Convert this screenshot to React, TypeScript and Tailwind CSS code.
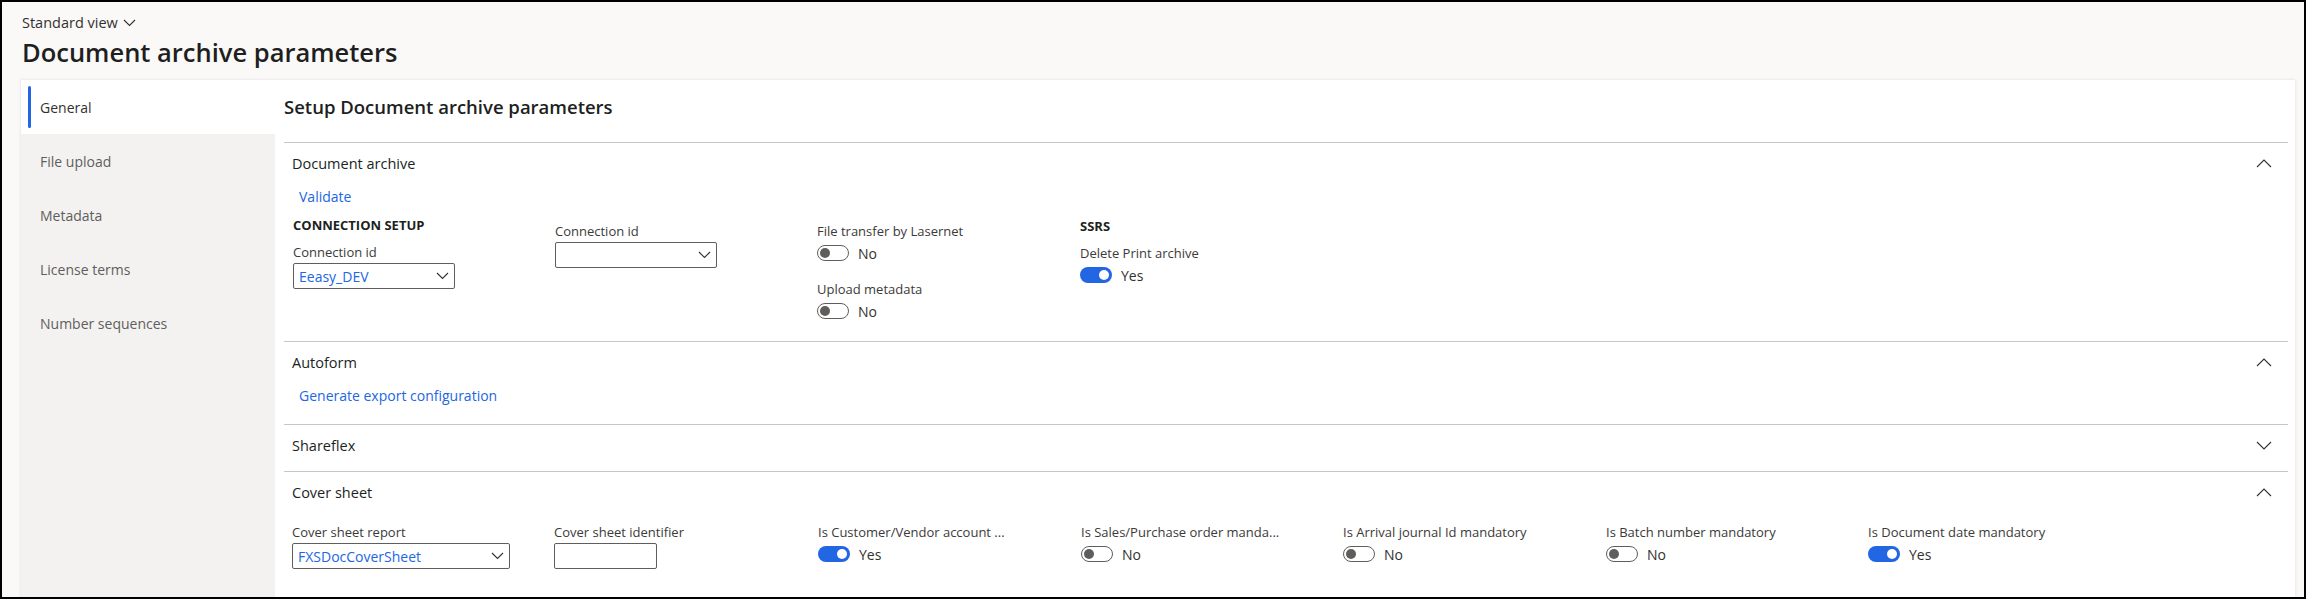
import React from "react"

const Chevron = ({ up }: { up?: boolean }) => (
  <svg width="16" height="9" viewBox="0 0 16 9" fill="none" stroke="#323130" strokeWidth="1.1">
    {up ? <polyline points="1,8 8,1 15,8" /> : <polyline points="1,1 8,8 15,1" />}
  </svg>
)

const SmallChevron = () => (
  <svg width="13" height="8" viewBox="0 0 13 8" fill="none" stroke="#323130" strokeWidth="1.1">
    <polyline points="1,1 6.5,6.5 12,1" />
  </svg>
)

const Toggle = ({ on }: { on?: boolean }) => (
  <div className="flex items-center h-[24px] gap-[9px]">
    {on ? (
      <div className="w-[32px] h-[16px] rounded-full bg-[#2266e3] flex items-center justify-end pr-[3px]">
        <div className="w-[10px] h-[10px] rounded-full bg-white" />
      </div>
    ) : (
      <div className="w-[32px] h-[16px] rounded-full border border-[#605e5c] flex items-center pl-[2px]">
        <div className="w-[10px] h-[10px] rounded-full bg-[#605e5c]" />
      </div>
    )}
    <span className="text-[14px] text-[#323130]">{on ? "Yes" : "No"}</span>
  </div>
)

const Dropdown = ({ value, w }: { value?: string; w: string }) => (
  <div className={`flex items-center justify-between border border-[#605e5c] rounded-[2px] h-[26px] pl-[5px] pr-[5px] ${w}`}>
    <span className="text-[14px] text-[#2266e3]">{value}</span>
    <SmallChevron />
  </div>
)

const Label = ({ children }: { children: React.ReactNode }) => (
  <div className="h-[20px] leading-[20px] text-[13px] text-[#3b3a39] whitespace-nowrap">{children}</div>
)

const Section = ({ title, up, children, pb }: { title: string; up?: boolean; children?: React.ReactNode; pb: string }) => (
  <div className={`border-t border-[#c8c6c4] ${pb}`}>
    <div className="h-[41px] flex items-center justify-between pl-[8px] pr-[16px]">
      <span className="text-[14.5px] text-[#201f1e]">{title}</span>
      <Chevron up={up} />
    </div>
    {children}
  </div>
)

const navItems = ["File upload", "Metadata", "License terms", "Number sequences"]

export default function App() {
  return (
    <div className="w-[2306px] h-[599px] border-2 border-black bg-[#faf9f8] flex flex-col overflow-hidden font-['Segoe_UI','Open_Sans',sans-serif]">
      <div className="pl-[20px] pt-[11px]">
        <div className="flex items-center gap-[5px] h-[20px] text-[14.5px] text-[#323130]">
          Standard view
          <SmallChevron />
        </div>
        <h1 className="mt-[1px] h-[36px] leading-[36px] text-[25.5px] font-semibold text-[#201f1e]">Document archive parameters</h1>
      </div>

      <div className="flex flex-1 ml-[19px] mr-[9px] mt-[10px] shadow-[0_0_3px_rgba(0,0,0,0.12)]">
        {/* left nav */}
        <div className="w-[254px] bg-[#f3f2f1] flex flex-col">
          <div className="h-[54px] bg-white flex items-center pl-[7px]">
            <div className="w-[3px] h-[42px] rounded-full bg-[#2266e3]" />
            <span className="ml-[9px] text-[14px] text-[#323130]">General</span>
          </div>
          {navItems.map((n) => (
            <div key={n} className="h-[54px] flex items-center pl-[19px] text-[14px] text-[#605e5c]">
              {n}
            </div>
          ))}
        </div>

        {/* main */}
        <div className="flex-1 bg-white pl-[9px] pr-[7px]">
          <h2 className="mt-[13px] h-[28px] leading-[28px] text-[18.5px] font-semibold text-[#201f1e]">Setup Document archive parameters</h2>
          <div className="mt-[21px]">
            <Section title="Document archive" up pb="pb-[18px]">
              <div className="h-[24px] flex items-center pl-[15px] text-[14px] text-[#2266e3]">Validate</div>
              <div className="flex pl-[9px]">
                <div className="w-[262px]">
                  <div className="mt-[7px] h-[20px] leading-[20px] text-[13px] font-bold text-[#201f1e]">CONNECTION SETUP</div>
                  <div className="mt-[7px]"><Label>Connection id</Label></div>
                  <div className="mt-[1px]"><Dropdown value="Eeasy_DEV" w="w-[162px]" /></div>
                </div>
                <div className="w-[262px] pt-[13px]">
                  <Label>Connection id</Label>
                  <div className="mt-[1px]"><Dropdown w="w-[162px]" /></div>
                </div>
                <div className="w-[263px] pt-[13px]">
                  <Label>File transfer by Lasernet</Label>
                  <Toggle />
                  <div className="mt-[14px]"><Label>Upload metadata</Label></div>
                  <Toggle />
                </div>
                <div className="w-[262px]">
                  <div className="mt-[8px] h-[20px] leading-[20px] text-[13px] font-bold text-[#201f1e]">SSRS</div>
                  <div className="mt-[7px]"><Label>Delete Print archive</Label></div>
                  <Toggle on />
                </div>
              </div>
            </Section>

            <Section title="Autoform" up pb="pb-[17px]">
              <div className="h-[24px] flex items-center pl-[15px] text-[14px] text-[#2266e3]">Generate export configuration</div>
            </Section>

            <Section title="Shareflex" pb="pb-[5px]" />

            <Section title="Cover sheet" up pb="pb-[20px]">
              <div className="flex pl-[8px] mt-[9px]">
                <div className="w-[262px]">
                  <Label>Cover sheet report</Label>
                  <div className="mt-[1px]"><Dropdown value="FXSDocCoverSheet" w="w-[218px]" /></div>
                </div>
                <div className="w-[264px]">
                  <Label>Cover sheet identifier</Label>
                  <div className="mt-[1px] w-[103px] h-[26px] border border-[#605e5c] rounded-[2px]" />
                </div>
                <div className="w-[263px]">
                  <Label>Is Customer/Vendor account ...</Label>
                  <Toggle on />
                </div>
                <div className="w-[262px]">
                  <Label>Is Sales/Purchase order manda...</Label>
                  <Toggle />
                </div>
                <div className="w-[263px]">
                  <Label>Is Arrival journal Id mandatory</Label>
                  <Toggle />
                </div>
                <div className="w-[262px]">
                  <Label>Is Batch number mandatory</Label>
                  <Toggle />
                </div>
                <div className="w-[262px]">
                  <Label>Is Document date mandatory</Label>
                  <Toggle on />
                </div>
              </div>
            </Section>
          </div>
        </div>
      </div>
    </div>
  )
}
